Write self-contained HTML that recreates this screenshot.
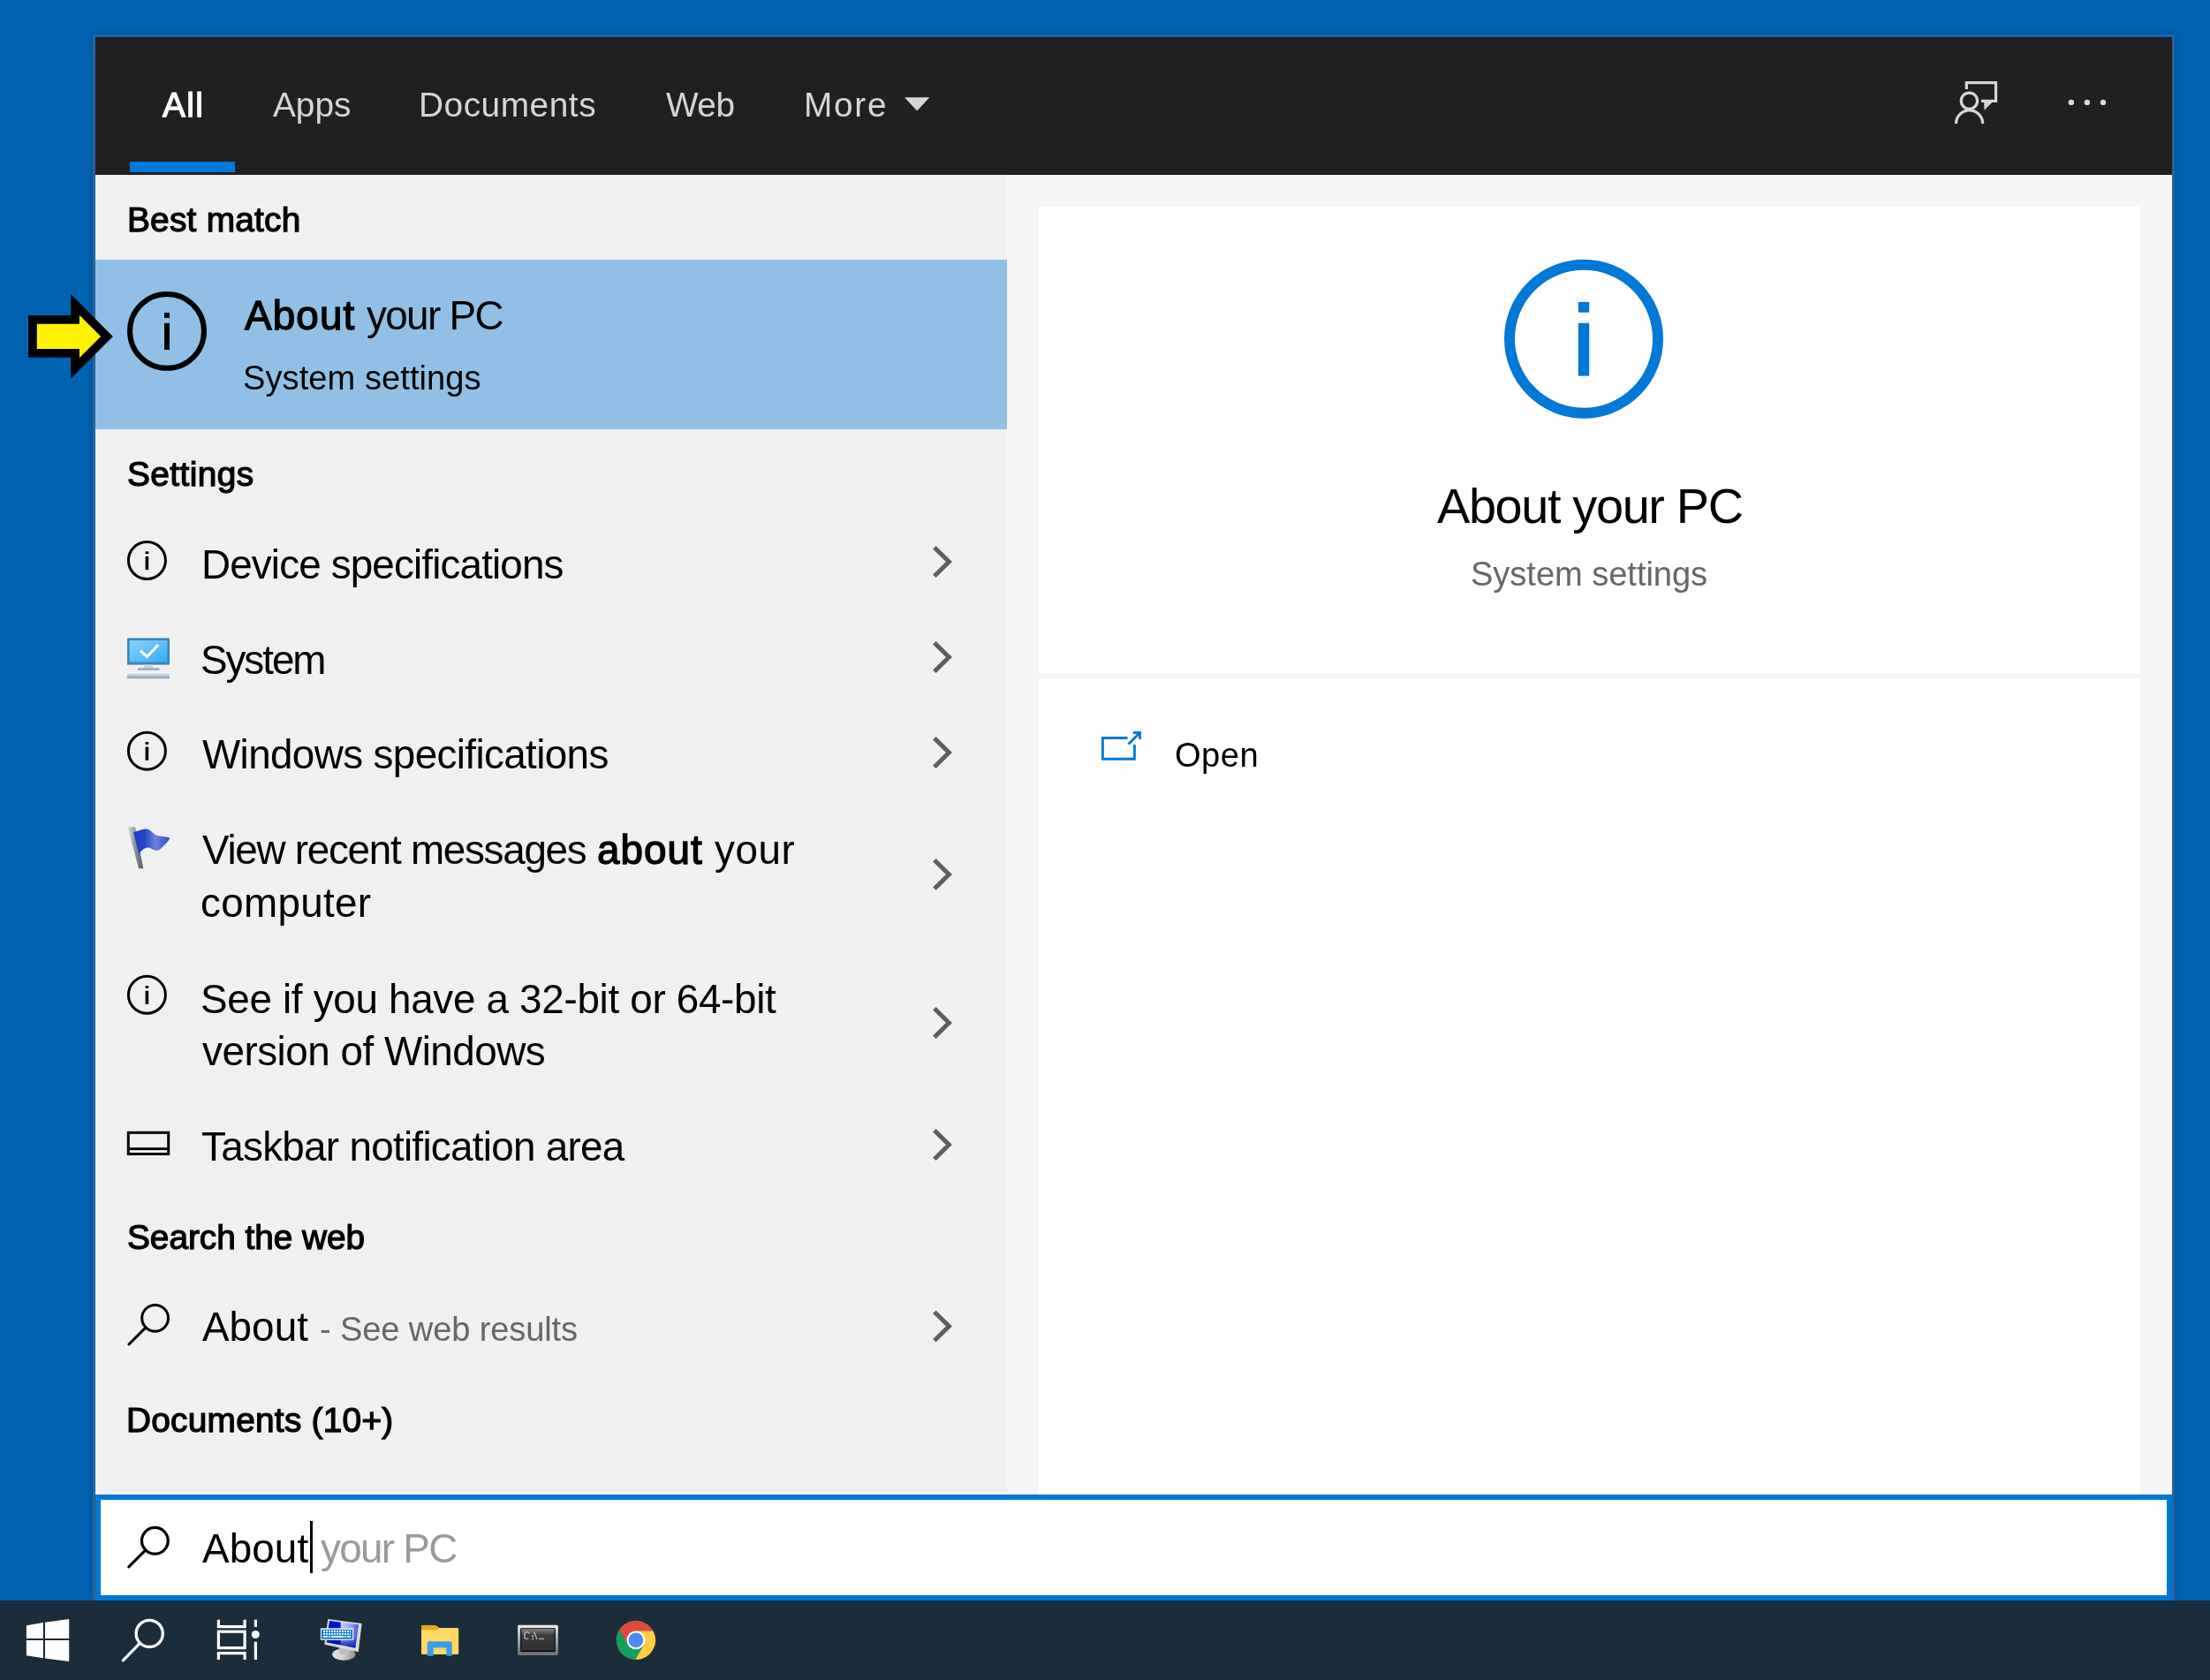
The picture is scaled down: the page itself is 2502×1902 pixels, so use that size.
<!DOCTYPE html>
<html><head><meta charset="utf-8"><title>Search</title>
<style>
html,body{margin:0;padding:0}
body{width:2502px;height:1902px;overflow:hidden;background:#0063b1;position:relative;font-family:"Liberation Sans",sans-serif}
.a{position:absolute}
.t{position:absolute;white-space:nowrap;line-height:1;font-family:"Liberation Sans",sans-serif;will-change:transform}
.t b{font-weight:400;-webkit-text-stroke-width:1.4px}
svg{position:absolute;overflow:visible}
#shadow{left:108px;top:42px;width:2351px;height:1770px;box-shadow:0 0 0 3px #2a6396,0 0 9px 3px rgba(0,45,100,.42)}
#topline{left:105px;top:40px;width:2357px;height:2px;background:#0a6cc9}
#hdr{left:108px;top:42px;width:2351px;height:156px;background:#202020}
#uline{left:147px;top:183px;width:119px;height:12px;background:#0078d7}
#lp{left:108px;top:198px;width:1032px;height:1494px;background:#f0f0f0}
#rp{left:1140px;top:198px;width:1319px;height:1494px;background:#f5f5f5}
#sel{left:108px;top:294px;width:1032px;height:192px;background:#91c0e7}
#card1{left:1176px;top:234px;width:1247px;height:528px;background:#fff}
#card2{left:1176px;top:768px;width:1247px;height:924px;background:#fff}
#sbox{left:108px;top:1692px;width:2339px;height:108px;background:#fff;border:6px solid #0078d7}
#cur{left:350.9px;top:1722.3px;width:2.8px;height:59px;background:#000}
#tb{left:0;top:1812px;width:2502px;height:90px;background:#1b2d3a}
</style></head><body>
<div class=a id=shadow></div>
<div class=a id=topline></div>
<div class=a id=hdr></div>
<div class=a id=uline></div>
<div class=a id=lp></div>
<div class=a id=rp></div>
<div class=a id=sel></div>
<div class=a id=card1></div>
<div class=a id=card2></div>
<div class=a id=sbox></div>
<div class=a id=cur></div>
<div class=a id=tb></div>
<svg width="2502" height="1902" viewBox="0 0 2502 1902" style="left:0;top:0">
<!-- header: More triangle -->
<path d="M1024 110.3h28.4l-14.2 15.3z" fill="#d6d6d6"/>
<!-- feedback icon -->
<g fill="none" stroke="#d6d6d6" stroke-width="3.2">
<path d="M2226.35 100.9V93.55H2259.55V114.45H2243"/>
<circle cx="2229.45" cy="114.2" r="9.15"/>
<path d="M2214.5 140a15.1 15.1 0 0 1 30.2 0"/>
</g>
<path d="M2246.3 115.5V124.7L2255.8 115.5z" fill="#d6d6d6"/>
<!-- dots -->
<g fill="#d8d8d8"><circle cx="2344.9" cy="115.9" r="3.2"/><circle cx="2362.9" cy="115.9" r="3.2"/><circle cx="2381" cy="115.9" r="3.2"/></g>
<!-- yellow arrow -->
<path d="M36.9 361.85H85V344.95L120.95 380.9L85 416.85V399.95H36.9z" fill="#fff200" stroke="#000" stroke-width="9.8" stroke-linejoin="miter"/>
<!-- big info icon (selected) -->
<circle cx="189" cy="374.9" r="41.95" fill="none" stroke="#000" stroke-width="6"/>
<rect x="186" y="354" width="6" height="5.9" fill="#000"/><rect x="186" y="365.8" width="6" height="30.2" fill="#000"/>
<!-- small info icons -->
<g id="inf1"><circle cx="166.4" cy="634.5" r="21" fill="none" stroke="#000" stroke-width="3"/><rect x="164.6" y="624.3" width="3.6" height="2.8"/><rect x="164.6" y="629.9" width="3.6" height="15.2"/></g>
<g transform="translate(0 215.7)"><circle cx="166.4" cy="634.5" r="21" fill="none" stroke="#000" stroke-width="3"/><rect x="164.6" y="624.3" width="3.6" height="2.8"/><rect x="164.6" y="629.9" width="3.6" height="15.2"/></g>
<g transform="translate(0 491.8)"><circle cx="166.4" cy="634.5" r="21" fill="none" stroke="#000" stroke-width="3"/><rect x="164.6" y="624.3" width="3.6" height="2.8"/><rect x="164.6" y="629.9" width="3.6" height="15.2"/></g>
<!-- chevrons -->
<g fill="none" stroke="#5e5e5e" stroke-width="5">
<path d="M1057.9 619.8L1074.4 636L1057.9 652.2"/>
<path d="M1057.9 727.8L1074.4 744L1057.9 760.2"/>
<path d="M1057.9 835.8L1074.4 852L1057.9 868.2"/>
<path d="M1057.9 973.8L1074.4 990L1057.9 1006.2"/>
<path d="M1057.9 1141.8L1074.4 1158L1057.9 1174.2"/>
<path d="M1057.9 1279.8L1074.4 1296L1057.9 1312.2"/>
<path d="M1057.9 1485.3L1074.4 1501.5L1057.9 1517.7"/>
</g>
<!-- system icon -->
<defs>
<linearGradient id="gs" x1="0" y1="0" x2="1" y2="1"><stop offset="0" stop-color="#8bd0fb"/><stop offset="1" stop-color="#2faeff"/></linearGradient>
<linearGradient id="gb" x1="0" y1="0" x2="0" y2="1"><stop offset="0" stop-color="#f4f5f7"/><stop offset="1" stop-color="#8299b3"/></linearGradient>
</defs>
<rect x="144" y="722.4" width="48" height="30.2" fill="#3a86b9"/>
<rect x="146.6" y="725" width="42.8" height="24.6" fill="url(#gs)"/>
<path d="M159 736.8l7.4 6.8l12.8-13.6" fill="none" stroke="#fff" stroke-width="3.2"/>
<rect x="163" y="752.6" width="10" height="3.5" fill="#c9d3de"/>
<rect x="156" y="756" width="24.5" height="3" fill="#a3b3c6"/>
<rect x="144" y="761.4" width="48" height="6.8" fill="url(#gb)"/>
<!-- flag icon -->
<defs><linearGradient id="gp" x1="0" y1="0" x2="1" y2="0"><stop offset="0" stop-color="#d9dcde"/><stop offset=".55" stop-color="#7d8990"/><stop offset="1" stop-color="#4f5d68"/></linearGradient>
<linearGradient id="gf" x1="0" y1="0" x2="1" y2="0"><stop offset="0" stop-color="#1f3dc6"/><stop offset=".3" stop-color="#2444c8"/><stop offset=".6" stop-color="#6b82d8"/><stop offset="1" stop-color="#3350cc"/></linearGradient></defs>
<path d="M144.6 936.3H153L162.3 983.2H157z" fill="url(#gp)"/>
<path d="M151 942.3C156 941.5 160 938.5 165.7 938.6C171 938.8 172.5 944 177 945.6C182 947.2 187 946.8 192.3 948.6C191.5 951 190 953 188.2 954.5C185.5 957.5 183 960.5 180 962.2C177.5 963.4 175.5 963 173 961.8C170.5 960.4 168.5 959.3 166 959.7C163 960.3 161.5 962 160 963.6C158.8 965 158 966 157.3 967.2z" fill="url(#gf)"/>
<!-- taskbar notif icon -->
<rect x="145.3" y="1282.3" width="45.4" height="24.2" fill="none" stroke="#000" stroke-width="3"/>
<rect x="145.3" y="1299.2" width="45.4" height="2.9" fill="#000"/>
<!-- list search icon -->
<g fill="none" stroke="#000" stroke-width="3" stroke-linecap="round"><circle cx="175.6" cy="1492.3" r="14.9"/><path d="M165 1502.9L145.9 1522"/></g>
<!-- right big info icon -->
<circle cx="1793" cy="383.7" r="84" fill="none" stroke="#0078d7" stroke-width="12"/>
<rect x="1786.8" y="341.9" width="12.4" height="11.8" fill="#0078d7"/><rect x="1786.8" y="365.7" width="12.4" height="59.9" fill="#0078d7"/>
<!-- open icon -->
<g fill="none" stroke="#0078d7" stroke-width="2.9">
<path d="M1276.5 835.5H1248.4V859.3H1284.4V843"/>
<path d="M1277.5 842.5l13-13"/>
<path d="M1283 829.5h7.5v7.5"/>
</g>
<!-- search box icon -->
<g fill="none" stroke="#000" stroke-width="3.2" stroke-linecap="round"><circle cx="175.35" cy="1744.3" r="14.9"/><path d="M164.8 1754.8L145.8 1773.8"/></g>
<!-- TASKBAR -->
<!-- windows logo -->
<g fill="#fff">
<path d="M29.9 1840.2L48.9 1837.1V1855H29.9z"/>
<path d="M51 1836.7L78.2 1832.9V1855H51z"/>
<path d="M29.9 1856.9H48.9V1877.3L29.9 1874.2z"/>
<path d="M51 1856.9H78.2V1880.9L51 1877.6z"/>
</g>
<!-- taskbar search -->
<g fill="none" stroke="#fff" stroke-width="3.3" stroke-linecap="round"><circle cx="169.2" cy="1849.4" r="15.1"/><path d="M158.3 1860.3l-19 19.5"/></g>
<!-- task view -->
<g fill="none" stroke="#fff" stroke-width="3.2">
<rect x="247.4" y="1847.2" width="29.7" height="18.5"/>
<path d="M247.4 1833.8v7.8h29.7v-7.8"/>
<path d="M247.4 1879.1v-7.4h29.7v7.4"/>
<path d="M289.4 1833.8v8.2M289.4 1858.8v20.3"/>
</g>
<circle cx="289.3" cy="1850.5" r="4.5" fill="#fff"/>
<!-- computer/keyboard icon -->
<defs>
<linearGradient id="gm" x1="0" y1="0" x2="1" y2="0"><stop offset="0" stop-color="#0012b4"/><stop offset=".42" stop-color="#0018d8"/><stop offset=".46" stop-color="#c9d6ff"/><stop offset=".8" stop-color="#8ea4f4"/><stop offset="1" stop-color="#3b55e6"/></linearGradient>
<linearGradient id="gm2" x1="0" y1="0" x2="0" y2="1"><stop offset="0" stop-color="#0010b0" stop-opacity="0"/><stop offset=".55" stop-color="#0010b0" stop-opacity=".15"/><stop offset="1" stop-color="#0010b0" stop-opacity=".95"/></linearGradient>
<linearGradient id="gst" x1="0" y1="0" x2="1" y2="0"><stop offset="0" stop-color="#e2e2e2"/><stop offset=".45" stop-color="#d2d2d2"/><stop offset="1" stop-color="#8f8f8f"/></linearGradient>
</defs>
<ellipse cx="389.3" cy="1873" rx="13.2" ry="6.7" fill="url(#gst)"/>
<path d="M383.5 1864l12 3l-1.5 6h-9z" fill="#bdbdbd"/>
<path d="M371.2 1833L409.7 1838L405.7 1870.3L367.3 1861.7z" fill="#d9d9d5"/>
<path d="M373 1835L406 1839.3L402.3 1865.7L369.8 1859.3z" fill="url(#gm)"/>
<path d="M373 1835L406 1839.3L402.3 1865.7L369.8 1859.3z" fill="url(#gm2)"/>
<rect x="362.8" y="1843.2" width="37.5" height="13.8" rx="1" fill="#e3e1da"/>
<rect x="364" y="1845" width="35" height="10.7" fill="#1580d8"/>
<g stroke="#fff" stroke-width="1.8"><path d="M366 1846.9h31" stroke-dasharray="2 1"/><path d="M366 1849.9h31" stroke-dasharray="2 1"/><path d="M366 1852.9h5M372 1852.9h2M375 1852.9h14M390 1852.9h2M393 1852.9h4"/></g>
<!-- folder -->
<path d="M477 1841.4q0-1.5 1.5-1.5h14.5l4.3 3h20.4q1.5 0 1.5 1.5v27q0 1.5-1.5 1.5h-39.2q-1.5 0-1.5-1.5z" fill="#ffd866"/>
<path d="M477 1841.4q0-1.5 1.5-1.5h14.5l4.3 3l-3 2.6H477z" fill="#e6a817"/>
<path d="M483.7 1874.7v-13.5q0-3 3-3h22.1q3 0 3 3v13.5h-6.5v-9.3h-14.6v9.3z" fill="#3d9be3"/>
<!-- cmd -->
<defs><linearGradient id="gc" x1="0" y1="0" x2="0" y2="1"><stop offset="0" stop-color="#ececec"/><stop offset=".5" stop-color="#a4a6a9"/><stop offset="1" stop-color="#6c6f74"/></linearGradient>
<linearGradient id="gc2" x1="0" y1="0" x2="0" y2="1"><stop offset="0" stop-color="#858585"/><stop offset=".3" stop-color="#3a3a3c"/><stop offset="1" stop-color="#313133"/></linearGradient></defs>
<rect x="586.1" y="1839.7" width="45.8" height="34.4" rx="1.5" fill="url(#gc)"/>
<rect x="589.1" y="1843.2" width="39.7" height="27" rx="1.2" fill="#0b0b0d"/>
<rect x="590.3" y="1844.2" width="37.3" height="24.3" fill="url(#gc2)"/>
<g fill="none" stroke="#cfcfcf" stroke-width="1.3" opacity=".85"><path d="M599.3 1849.3L598 1847.8H595.2L593.9 1849.3V1853.9L595.2 1855.4H598.5"/><path d="M604.5 1847.2L608 1856"/><path d="M610 1855.4H616"/></g>
<rect x="602.2" y="1851.6" width="1.7" height="1.5" fill="#d8d8d8"/><rect x="602.2" y="1854.7" width="1.7" height="1.5" fill="#d8d8d8"/>
<rect x="623" y="1871.9" width="3.6" height="1.5" rx=".7" fill="#3a9be0"/>
<!-- chrome -->
<g transform="translate(719.9 1856.8)">
<circle r="22.1" fill="#dd4b3e"/>
<path d="M9.01 5.20L-0.74 22.09A22.1 22.1 0 0 0 19.50 -10.40L0.00 -10.40z" fill="#ffce42"/>
<path d="M-9.01 5.20L-18.76 -11.69A22.1 22.1 0 0 0 -0.74 22.09L9.01 5.20z" fill="#12a05c"/>
<circle r="10.4" fill="#fff"/><circle r="8.4" fill="#4a8af4"/>
</g>
</svg>
<div class=t style="left:184.4px;top:100.0px;font-size:38.8px;-webkit-text-stroke-width:1.25px;letter-spacing:1.4px;color:#fff">All</div>
<div class=t style="left:308.5px;top:100.0px;font-size:38.8px;letter-spacing:-0.033px;color:#d6d6d6">Apps</div>
<div class=t style="left:473.7px;top:100.0px;font-size:38.8px;letter-spacing:0.538px;color:#d6d6d6">Documents</div>
<div class=t style="left:753.8px;top:100.0px;font-size:38.8px;letter-spacing:-0.55px;color:#d6d6d6">Web</div>
<div class=t style="left:910.2px;top:100.0px;font-size:38.8px;letter-spacing:1.7px;color:#d6d6d6">More</div>
<div class=t style="left:143.8px;top:230.0px;font-size:38.8px;-webkit-text-stroke-width:1.25px;letter-spacing:0.244px;color:#000">Best match</div>
<div class=t style="left:277.2px;top:334.8px;font-size:45.8px;letter-spacing:1.15px;color:#000"><b>About</b></div>
<div class=t style="left:415.4px;top:334.8px;font-size:45.8px;letter-spacing:-1.65px;color:#000">your PC</div>
<div class=t style="left:274.5px;top:409.0px;font-size:38.1px;letter-spacing:0.057px;color:#000">System settings</div>
<div class=t style="left:144.0px;top:518.0px;font-size:38.8px;-webkit-text-stroke-width:1.25px;letter-spacing:0.429px;color:#000">Settings</div>
<div class=t style="left:227.9px;top:616.6px;font-size:45.8px;letter-spacing:-0.86px;color:#000">Device specifications</div>
<div class=t style="left:227.2px;top:725.0px;font-size:45.8px;letter-spacing:-2.04px;color:#000">System</div>
<div class=t style="left:229.2px;top:832.0px;font-size:45.8px;letter-spacing:-0.624px;color:#000">Windows specifications</div>
<div class=t style="left:228.9px;top:940.2px;font-size:45.8px;letter-spacing:-1.274px;color:#000">View recent messages</div>
<div class=t style="left:676.4px;top:940.2px;font-size:45.8px;letter-spacing:1.0px;color:#000"><b>about</b></div>
<div class=t style="left:808.5px;top:940.2px;font-size:45.8px;letter-spacing:0.533px;color:#000">your</div>
<div class=t style="left:227.2px;top:1000.4px;font-size:45.8px;letter-spacing:0.286px;color:#000">computer</div>
<div class=t style="left:227.2px;top:1109.0px;font-size:45.8px;letter-spacing:-0.306px;color:#000">See if you have a 32-bit or 64-bit</div>
<div class=t style="left:229.2px;top:1168.3px;font-size:45.8px;letter-spacing:-0.488px;color:#000">version of Windows</div>
<div class=t style="left:228.2px;top:1276.2px;font-size:45.8px;letter-spacing:-0.712px;color:#000">Taskbar notification area</div>
<div class=t style="left:144.0px;top:1382.0px;font-size:38.8px;-webkit-text-stroke-width:1.25px;letter-spacing:-0.031px;color:#000">Search the web</div>
<div class=t style="left:229.2px;top:1480.4px;font-size:45.8px;letter-spacing:0.05px;color:#000">About</div>
<div class=t style="left:361.7px;top:1486.4px;font-size:38.1px;letter-spacing:-0.137px;color:#666">- See web results</div>
<div class=t style="left:143.2px;top:1588.6px;font-size:38.8px;-webkit-text-stroke-width:1.25px;letter-spacing:0.257px;color:#000">Documents (10+)</div>
<div class=t style="left:1626.9px;top:545.0px;font-size:55.8px;letter-spacing:-1.325px;color:#000">About your PC</div>
<div class=t style="left:1665.0px;top:631.3px;font-size:38.1px;letter-spacing:-0.043px;color:#666">System settings</div>
<div class=t style="left:1330.4px;top:835.9px;font-size:38.1px;letter-spacing:0.5px;color:#000">Open</div>
<div class=t style="left:228.8px;top:1730.6px;font-size:45.8px;letter-spacing:0.125px;color:#000">About</div>
<div class=t style="left:363.0px;top:1730.6px;font-size:45.8px;letter-spacing:-1.7px;color:#9a9a9a">your PC</div>
</body></html>
